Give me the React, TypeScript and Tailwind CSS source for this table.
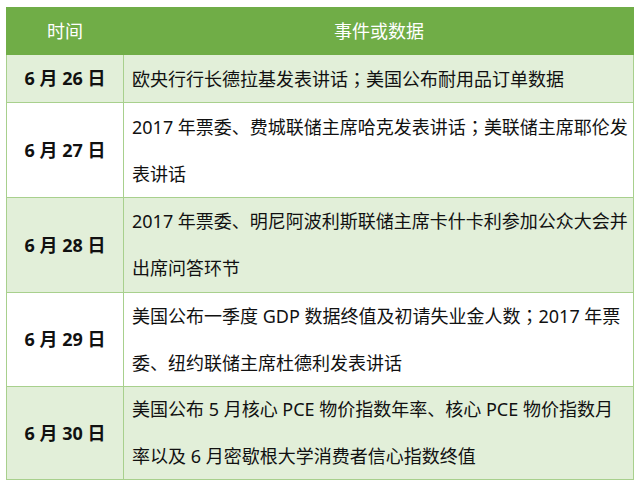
import React from "react";

const S = () => (
  <span style={{ fontFamily: '"Noto Sans CJK JP", sans-serif' }}>；</span>
);

const rows: { date: string; lines: React.ReactNode[]; h: string; alt: boolean }[] = [
  { date: "6 月 26 日", lines: [<>欧央行行长德拉基发表讲话<S />美国公布耐用品订单数据</>], h: "h-[48px]", alt: true },
  { date: "6 月 27 日", lines: [<>2017 年票委、费城联储主席哈克发表讲话<S />美联储主席耶伦发</>, "表讲话"], h: "h-[95px]", alt: false },
  { date: "6 月 28 日", lines: ["2017 年票委、明尼阿波利斯联储主席卡什卡利参加公众大会并", "出席问答环节"], h: "h-[95px]", alt: true },
  { date: "6 月 29 日", lines: [<>美国公布一季度 GDP 数据终值及初请失业金人数<S />2017 年票</>, "委、纽约联储主席杜德利发表讲话"], h: "h-[94px]", alt: false },
  { date: "6 月 30 日", lines: ["美国公布 5 月核心 PCE 物价指数年率、核心 PCE 物价指数月", "率以及 6 月密歇根大学消费者信心指数终值"], h: "h-[93px]", alt: true },
];

export default function App() {
  return (
    <div
      className="w-[640px] h-[492px] bg-white pt-[7px] pl-[6px] text-[18px] text-[#111]"
      style={{ fontFamily: '"Noto Sans", "Noto Sans CJK SC", sans-serif' }}
    >
      <div className="w-[628px] flex flex-col">
        <div className="flex h-[48px] bg-[#70ad47] text-white">
          <div className="w-[118px] flex items-center justify-center">时间</div>
          <div className="flex-1 flex items-center justify-center">事件或数据</div>
        </div>
        {rows.map((r, i) => (
          <div
            key={i}
            className={`flex ${r.h} border-x border-b border-[#a8d08d] ${r.alt ? "bg-[#e2efd9]" : "bg-white"}`}
          >
            <div className="w-[117px] shrink-0 flex items-center justify-center font-bold border-r border-[#a8d08d]">
              {r.date}
            </div>
            <div className="flex-1 flex flex-col justify-center pl-[8px] leading-[47px] whitespace-nowrap">
              {r.lines.map((l, j) => (
                <div key={j}>{l}</div>
              ))}
            </div>
          </div>
        ))}
      </div>
    </div>
  );
}
